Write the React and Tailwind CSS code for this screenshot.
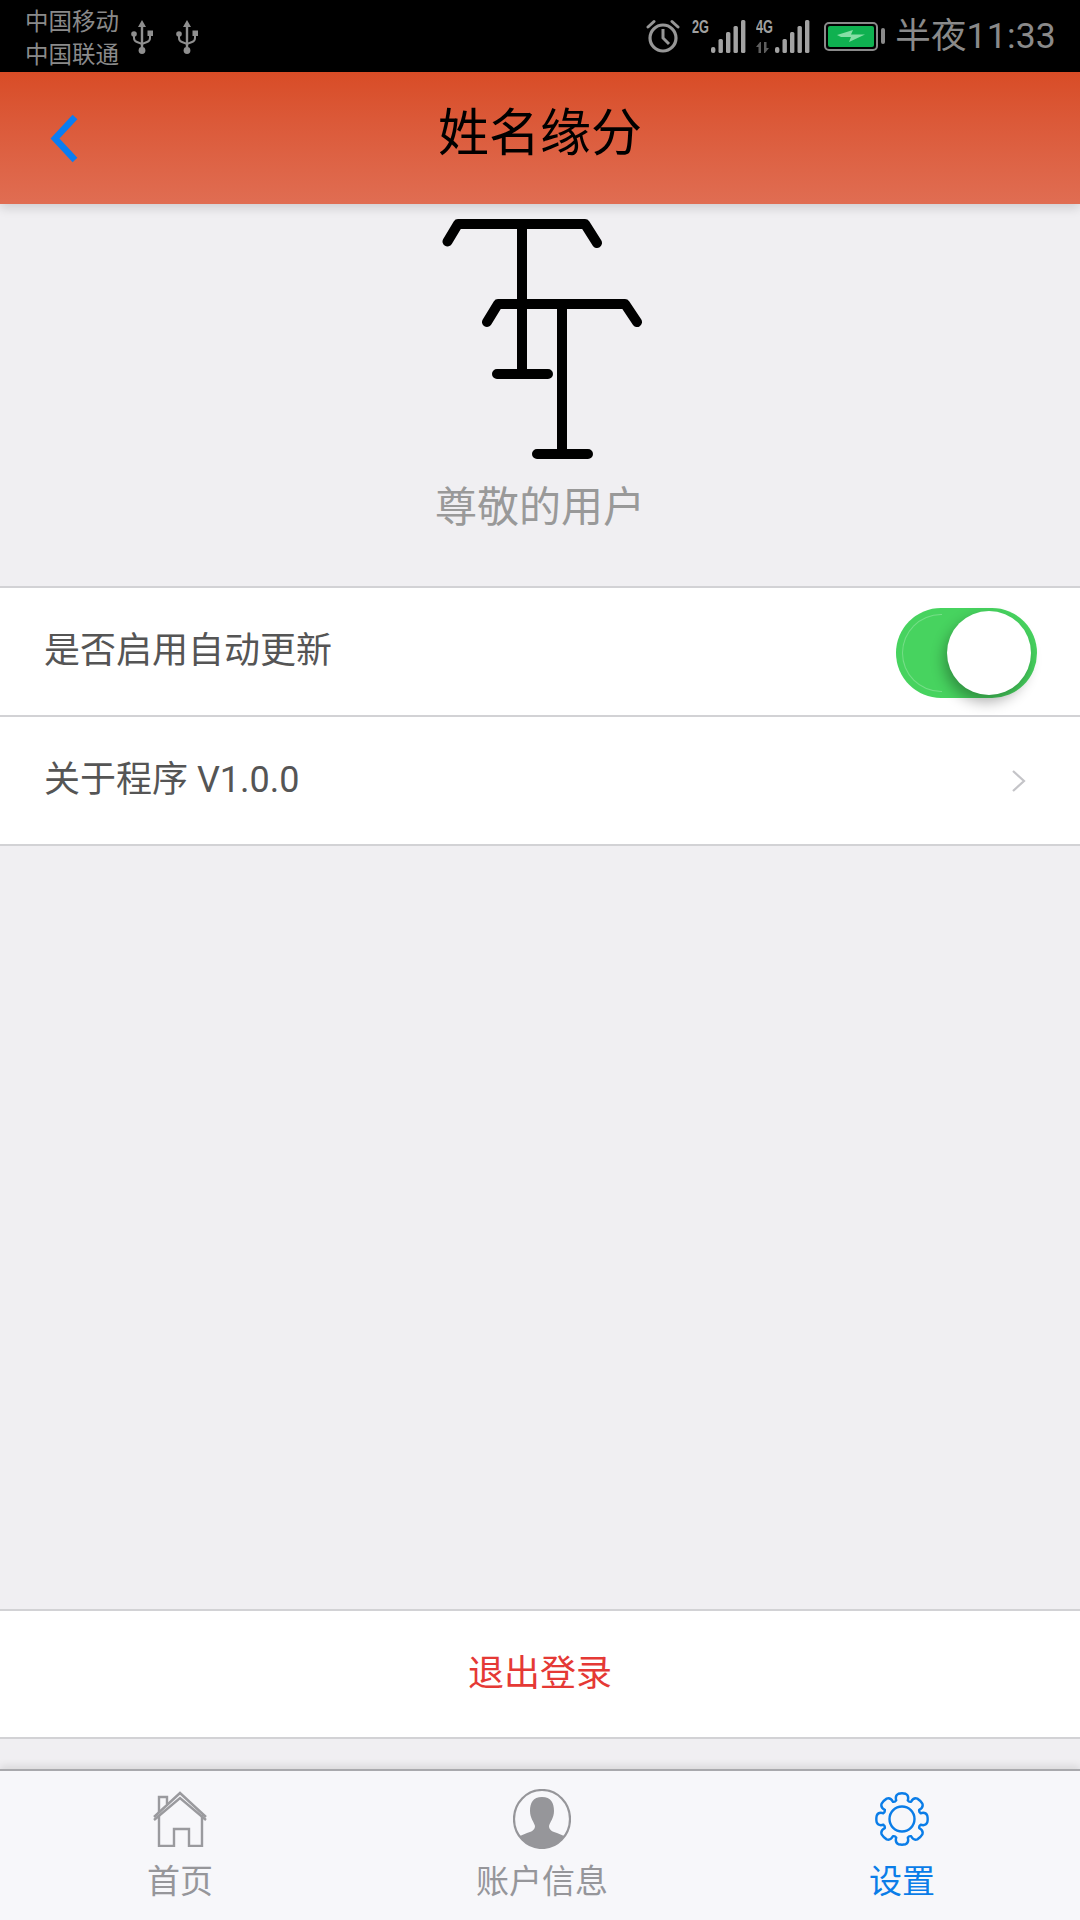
import React from "react";

const CJK = "font-['Roboto','Noto_Sans_CJK_SC',sans-serif]";

// 8 teeth, one pointing straight up
const gearPath = () => {
  const cx = 27;
  const cy = 27;
  const outer = 25.5;
  const inner = 19.5;
  let d = "";
  for (let i = 0; i < 8; i++) {
    const a = (i * Math.PI) / 4 - Math.PI / 2;
    const pt = (r, off) => {
      const x = cx + r * Math.cos(a + off);
      const y = cy + r * Math.sin(a + off);
      return `${x.toFixed(2)} ${y.toFixed(2)}`;
    };
    d += `${i == 0 ? "M" : "L"}${pt(inner, -0.3)} `;
    d += `Q${pt(outer - 1, -0.3)} ${pt(outer, -0.14)} `;
    d += `Q${pt(outer + 0.6, 0)} ${pt(outer, 0.14)} `;
    d += `Q${pt(outer - 1, 0.3)} ${pt(inner, 0.3)} `;
    d += `Q${pt(inner - 1.4, 0.39)} ${pt(inner, 0.485)} `;
  }
  return d + "Z";
};

const UsbIcon = () => (
  <svg width="22" height="34" viewBox="0 0 22 34" fill="#8f8f8f">
    <path d="M11 0 L15 7 L12.2 7 L12.2 28 L9.8 28 L9.8 7 L7 7 Z" />
    <circle cx="11" cy="30.5" r="3.4" />
    <circle cx="3" cy="14" r="2.8" />
    <rect x="16.5" y="10.5" width="5.5" height="5.5" />
    <path d="M3 15 V18 Q3 21 6 22 L11 24 L16 22 Q19 21 19 18 V15" fill="none" stroke="#8f8f8f" strokeWidth="2" />
  </svg>
);

const AlarmIcon = () => (
  <svg width="34" height="34" viewBox="0 0 34 34" fill="none" stroke="#979797">
    <circle cx="17" cy="19" r="13" strokeWidth="3.2" />
    <path d="M17 10 V19 L23 25" strokeWidth="3" />
    <path d="M2 8 L8 2.5 M32 8 L26 2.5" strokeWidth="3" strokeLinecap="round" />
  </svg>
);

const SignalIcon = ({ label, arrows }) => (
  <svg width="54" height="36" viewBox="0 0 54 36">
    <text x="0" y="15" fontFamily="Liberation Sans, sans-serif" fontWeight="700" fontSize="18" fill="#a0a0a0" textLength="17" lengthAdjust="spacingAndGlyphs">
      {label}
    </text>
    {arrows && <path d="M4 24 L0 29 H2.5 V35 H5 V24 Z M9 35 L13 30 H10.5 V24 H8 V35 Z" fill="#5e5e5e" />}
    <g fill="#a3a3a3">
      <rect x="19" y="29" width="4.4" height="6" rx="2" />
      <rect x="26.5" y="21" width="4.4" height="14" rx="1.5" />
      <rect x="34" y="14" width="4.4" height="21" rx="1.5" />
      <rect x="41.5" y="8" width="4.4" height="27" rx="1.5" />
      <rect x="49" y="2" width="4.4" height="33" rx="1.5" />
    </g>
  </svg>
);

const BatteryIcon = () => (
  <div className="flex items-center gap-[3px]">
    <div className="w-[54px] h-[29px] rounded-[5px] border-2 border-[#8a8a8a] p-[2px]">
      <div className="h-full rounded-[2px] bg-[#0fb150] flex items-center justify-center">
        <svg width="28" height="14" viewBox="0 0 28 14">
          <path d="M0 6 L16 1 L14 5.5 H28 L12 13 L14 8 H4 Z" fill="#86dfa6" />
        </svg>
      </div>
    </div>
    <div className="w-[4px] h-[16px] rounded-[2px] bg-[#8a8a8a]" />
  </div>
);

const StatusBar = () => (
  <div className={`h-[72px] bg-black flex items-center justify-between pl-[25px] pr-[24px] text-[#8a8a8a] ${CJK}`}>
    <div className="flex items-center">
      <div className="text-[23.5px] leading-[33px] pt-[5px]">
        <div>中国移动</div>
        <div>中国联通</div>
      </div>
      <div className="flex items-center gap-[23px] ml-[12px] mt-[1px]">
        <UsbIcon />
        <UsbIcon />
      </div>
    </div>
    <div className="flex items-center">
      <AlarmIcon />
      <div className="ml-[12px] flex gap-[10px]">
        <SignalIcon label="2G" />
        <SignalIcon label="4G" arrows />
      </div>
      <div className="ml-[14px]">
        <BatteryIcon />
      </div>
      <div className="ml-[10px] pt-[2px] text-[35.5px] leading-none tracking-[0.2px]">半夜11:33</div>
    </div>
  </div>
);

const Header = () => (
  <div className="relative z-10 h-[132px] pb-[10px] grid grid-cols-[1fr_auto_1fr] items-center bg-gradient-to-b from-[#d84c26] to-[#e06d52] shadow-[0_4px_10px_rgba(0,0,0,0.14)]">
    <svg width="130" height="60" viewBox="0 0 130 60" fill="none" className="mt-[10px]">
      <path d="M75 9 L55 30.5 L75 52" stroke="#0a7df2" strokeWidth="6.5" />
    </svg>
    <h1 className={`text-[51px] leading-none text-black ${CJK}`}>姓名缘分</h1>
    <div />
  </div>
);

const Avatar = () => (
  <svg width="220" height="248" viewBox="430 216 220 248" fill="none" stroke="#000" strokeWidth="10" strokeLinecap="round" strokeLinejoin="round">
    <path d="M447.5 241.5 L458 224 H585 L597 243" />
    <path d="M522 224 V374 M497 374 H548" />
    <path d="M487 322 L498 304 H625 L637 322" />
    <path d="M562 304 V454 M537 454 H588" />
  </svg>
);

const Toggle = () => (
  <div className="relative mt-[3px] w-[141px] h-[90px] rounded-full bg-[#47d35f] flex items-center justify-end pr-[6px]">
    <div className="absolute left-[6px] top-[6px] w-[40px] h-[78px] rounded-l-full border-l border-y border-white/25" />
    <div className="relative w-[84px] h-[84px] rounded-full bg-white shadow-[-3px_7px_14px_rgba(0,0,0,0.32)]" />
  </div>
);

const Row = ({ children, right }) => (
  <div className={`h-[129px] bg-white border-b-2 border-[#d2d2d5] pl-[44px] pr-[43px] flex items-center justify-between text-[36px] text-[#555] ${CJK}`}>
    <span className="mt-[-2px]">{children}</span>
    {right}
  </div>
);

const HomeIcon = () => (
  <svg width="54" height="56" viewBox="0 0 54 56" fill="none" stroke="#9a9a9e" strokeWidth="2.4">
    <path d="M1 26 L27 2 L53 26" />
    <path d="M1 29 L27 7 L53 29" />
    <path d="M6 24 V55 H21 V38 H36 V55 H49 V24" />
    <path d="M6 22 V6 H14 V13" />
  </svg>
);

const UserIcon = () => (
  <svg width="58" height="60" viewBox="0 0 58 60">
    <clipPath id="userClip">
      <ellipse cx="29" cy="30" rx="28" ry="29" />
    </clipPath>
    <g clipPath="url(#userClip)" fill="#96969a">
      <path d="M29 8 C38 8 41 14 41 22 C41 29 37 33 36 37 C36 41 40 43 44 44 L58 50 V60 H0 V50 L14 44 C18 43 22 41 22 37 C21 33 17 29 17 22 C17 14 20 8 29 8 Z" />
    </g>
    <ellipse cx="29" cy="30" rx="28" ry="29" fill="none" stroke="#96969a" strokeWidth="2.2" />
  </svg>
);

const GearIcon = () => (
  <svg width="54" height="54" viewBox="0 0 54 54" fill="none" stroke="#0a7de8" strokeWidth="2.4" strokeLinejoin="round">
    <path d={gearPath()} />
    <circle cx="27" cy="27" r="12.5" />
  </svg>
);

const Tab = ({ icon, label, active }) => (
  <div className="flex flex-col items-center">
    <div className="h-[60px] flex items-center justify-center">{icon}</div>
    <span className={`mt-[11px] text-[33px] leading-[44px] ${active ? "text-[#0a7de8]" : "text-[#96969a]"} ${CJK}`}>{label}</span>
  </div>
);

const App = () => {
  return (
    <div className="w-[1080px] h-[1920px] flex flex-col bg-[#f0eff2] overflow-hidden">
      <StatusBar />
      <Header />
      <div className="h-[384px] pt-[12px] flex flex-col items-center border-b-2 border-[#d2d2d5]">
        <Avatar />
        <span className={`mt-[16px] text-[42px] leading-[56px] text-[#999] ${CJK}`}>尊敬的用户</span>
      </div>
      <Row right={<Toggle />}>是否启用自动更新</Row>
      <Row
        right={
          <svg width="16" height="24" viewBox="0 0 16 24" fill="none" stroke="#c4c4c8" strokeWidth="2.2" className="mr-[10px]">
            <path d="M2 2 L13 12 L2 22" />
          </svg>
        }
      >
        关于程序 V1.0.0
      </Row>
      <div className="flex-1 flex flex-col justify-end pb-[30px]">
        <div className={`h-[130px] bg-white border-y-2 border-[#d2d2d5] flex items-center justify-center text-[36px] text-[#e53935] ${CJK}`}>
          退出登录
        </div>
      </div>
      <div className="h-[151px] bg-[#f7f7fa] border-t-2 border-[#a9a9ad] pt-[18px] grid grid-cols-[360px_364px_356px] shadow-[0_-3px_8px_rgba(0,0,0,0.1)]">
        <Tab icon={<HomeIcon />} label="首页" />
        <Tab icon={<UserIcon />} label="账户信息" />
        <Tab icon={<GearIcon />} label="设置" active />
      </div>
    </div>
  );
};

export default App;
